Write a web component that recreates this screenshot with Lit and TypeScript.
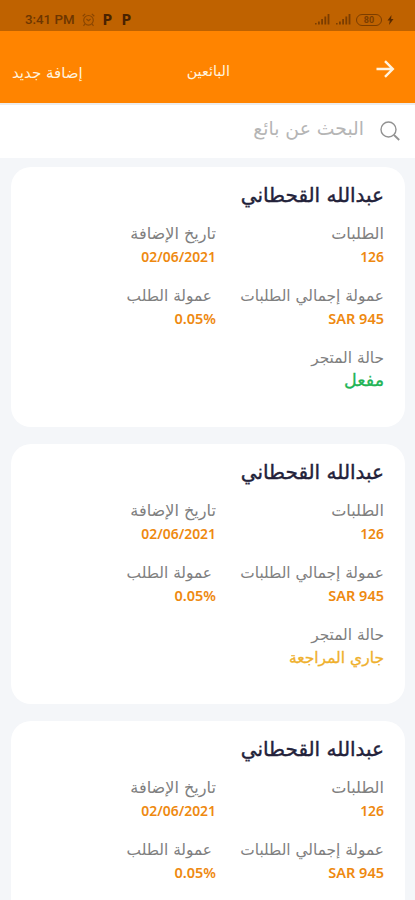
import { LitElement, html, css, svg } from "lit";
import { customElement, property } from "lit/decorators.js";

interface Seller {
  name: string;
  status: string;
  tone: string;
}

const sellers: Seller[] = [
  { name: "عبدالله القحطاني", status: "مفعل", tone: "active" },
  { name: "عبدالله القحطاني", status: "جاري المراجعة", tone: "pending" },
  { name: "عبدالله القحطاني", status: "", tone: "active" },
];

@customElement("seller-card")
class SellerCard extends LitElement {
  @property({ attribute: false }) seller!: Seller;

  static styles = css`
    :host {
      display: block;
      box-sizing: border-box;
      height: 260px;
      padding: 13px 21px 0;
      border-radius: 20px;
      background: #fff;
    }
    .name {
      height: 30px;
      line-height: 30px;
      font-size: 20px;
      color: #23223a;
      -webkit-text-stroke: 0.4px #23223a;
      white-space: nowrap;
    }
    .grid {
      display: grid;
      grid-template-columns: 168px 1fr;
      grid-auto-rows: 45px;
      row-gap: 17px;
      margin-top: 13px;
    }
    .label,
    .value {
      height: 22px;
      line-height: 22px;
      white-space: nowrap;
    }
    .label {
      font-size: 15.35px;
      color: #808080;
    }
    .wide {
      font-size: 16.1px;
    }
    .inset {
      padding-right: 4px;
    }
    .value {
      height: 23px;
      font: 600 14.5px/23px "Noto Sans", "DejaVu Sans", sans-serif;
      color: #ee8910;
      direction: ltr;
      text-align: right;
    }
    .tight {
      font-size: 13.9px;
    }
    .status {
      font: 15.5px/24px "DejaVu Sans", sans-serif;
      direction: rtl;
    }
    .active {
      font-size: 17.5px;
      line-height: 22px;
      color: #22b455;
      -webkit-text-stroke: 0.3px #22b455;
    }
    .pending {
      color: #efb02c;
      -webkit-text-stroke: 0.3px #efb02c;
    }
  `;

  render() {
    const { name, status, tone } = this.seller;
    return html`
      <div class="name">${name}</div>
      <div class="grid">
        <div><div class="label wide">الطلبات</div><div class="value tight">126</div></div>
        <div><div class="label wide">تاريخ الإضافة</div><div class="value tight">02/06/2021</div></div>
        <div><div class="label">عمولة إجمالي الطلبات</div><div class="value">SAR 945</div></div>
        <div><div class="label inset">عمولة الطلب</div><div class="value">0.05%</div></div>
        ${status
          ? html`<div>
              <div class="label">حالة المتجر</div>
              <div class="value status ${tone}">${status}</div>
            </div>`
          : null}
      </div>
    `;
  }
}

const signal = () => svg`
  <path d="M1 10.5h1.6v-1.5H1zM4 10.5h1.8v-3H4zM7.2 10.5H9V5H7.2zM10.4 10.5h1.8v-8h-1.8zM13.6 10.5h1.8V0h-1.8z" fill="#7b3d00"/>`;

@customElement("app-root")
class AppRoot extends LitElement {
  static styles = css`
    :host {
      display: block;
      height: 900px;
      overflow: hidden;
      background: #f4f6f9;
      font-family: "DejaVu Sans", sans-serif;
      direction: rtl;
    }
    .status-bar {
      display: flex;
      align-items: center;
      justify-content: space-between;
      direction: ltr;
      box-sizing: border-box;
      height: 31px;
      padding: 8px 21px 0 25px;
      background: #bf6200;
      color: #6d3600;
    }
    .group {
      display: flex;
      align-items: center;
    }
    .clock {
      width: 51px;
      font: 500 13.3px/16px Roboto, sans-serif;
      white-space: nowrap;
    }
    .alarm {
      margin: 0 8px 0 6px;
    }
    .p {
      width: 19px;
      font: 900 14px/16px Roboto, sans-serif;
      color: #4a2200;
    }
    .sig {
      margin-right: 5px;
    }
    .sig + .battery {
      margin-left: 0;
    }
    .battery {
      box-sizing: border-box;
      width: 26px;
      height: 12px;
      border: 1px solid #7b3d00;
      border-radius: 6px;
      text-align: center;
      font: 700 9px/10px Roboto, sans-serif;
      color: #7b3d00;
    }
    .bolt {
      margin-left: 5px;
    }
    .bar {
      display: grid;
      grid-template-columns: 165px auto 1fr;
      align-items: center;
      box-sizing: border-box;
      height: 72px;
      padding: 8px 20px 0 12px;
      background: #ff8400;
      color: #fff3df;
      font-size: 14.4px;
    }
    .back {
      display: block;
      margin-top: -4px;
    }
    .action {
      justify-self: end;
      font-size: 15px;
      margin-top: 3px;
    }
    .search {
      display: flex;
      align-items: center;
      box-sizing: border-box;
      height: 55px;
      padding: 0 15px 2px;
      gap: 16px;
      border-top: 2px solid #ececec;
      background: #fff;
      color: #b5b5b5;
      font-size: 18.8px;
    }
    .hint {
      margin-top: -5px;
    }
    .list {
      display: flex;
      flex-direction: column;
      gap: 17px;
      padding: 9px 10px 0 11px;
    }
  `;

  render() {
    return html`
      <div class="status-bar">
        <div class="group">
          <span class="clock">3:41 PM</span>
          <svg class="alarm" width="13" height="14" viewBox="0 0 13 14" fill="none" stroke="#8a4600" stroke-width="1.2">
            <circle cx="6.5" cy="7.3" r="4.8" />
            <path d="M.7 3.2 3.2.9M12.3 3.2 9.8.9M2.8 11.2 1.5 12.8M10.2 11.2l1.3 1.6M4.4 6l2.1 1.8L8.6 6" />
          </svg>
          <span class="p">P</span><span class="p">P</span>
        </div>
        <div class="group">
          <svg class="sig" width="16" height="11">${signal()}</svg>
          <svg class="sig" width="16" height="11">${signal()}</svg>
          <span class="battery">80</span>
          <svg class="bolt" width="7" height="10" viewBox="0 0 7 10"><path d="M4.5 0 .5 5.6h2.3L2 10l4.5-6H4.1z" fill="#5a2b00" /></svg>
        </div>
      </div>
      <div class="bar">
        <svg class="back" width="19" height="18" viewBox="0 0 19 18" fill="none" stroke="#fff3df" stroke-width="2.4">
          <path d="M.5 9h16M9 1.2 16.8 9 9 16.8" />
        </svg>
        <span class="title">البائعين</span>
        <span class="action">إضافة جديد</span>
      </div>
      <div class="search">
        <svg width="20" height="20" viewBox="0 0 20 20" fill="none" stroke="#929292" stroke-width="1.4">
          <circle cx="8.5" cy="8.5" r="7.5" />
          <path d="m14 14 5.2 5" stroke-width="1.8" />
        </svg>
        <span class="hint">البحث عن بائع</span>
      </div>
      <div class="list">${sellers.map((s) => html`<seller-card .seller=${s}></seller-card>`)}</div>
    `;
  }
}
